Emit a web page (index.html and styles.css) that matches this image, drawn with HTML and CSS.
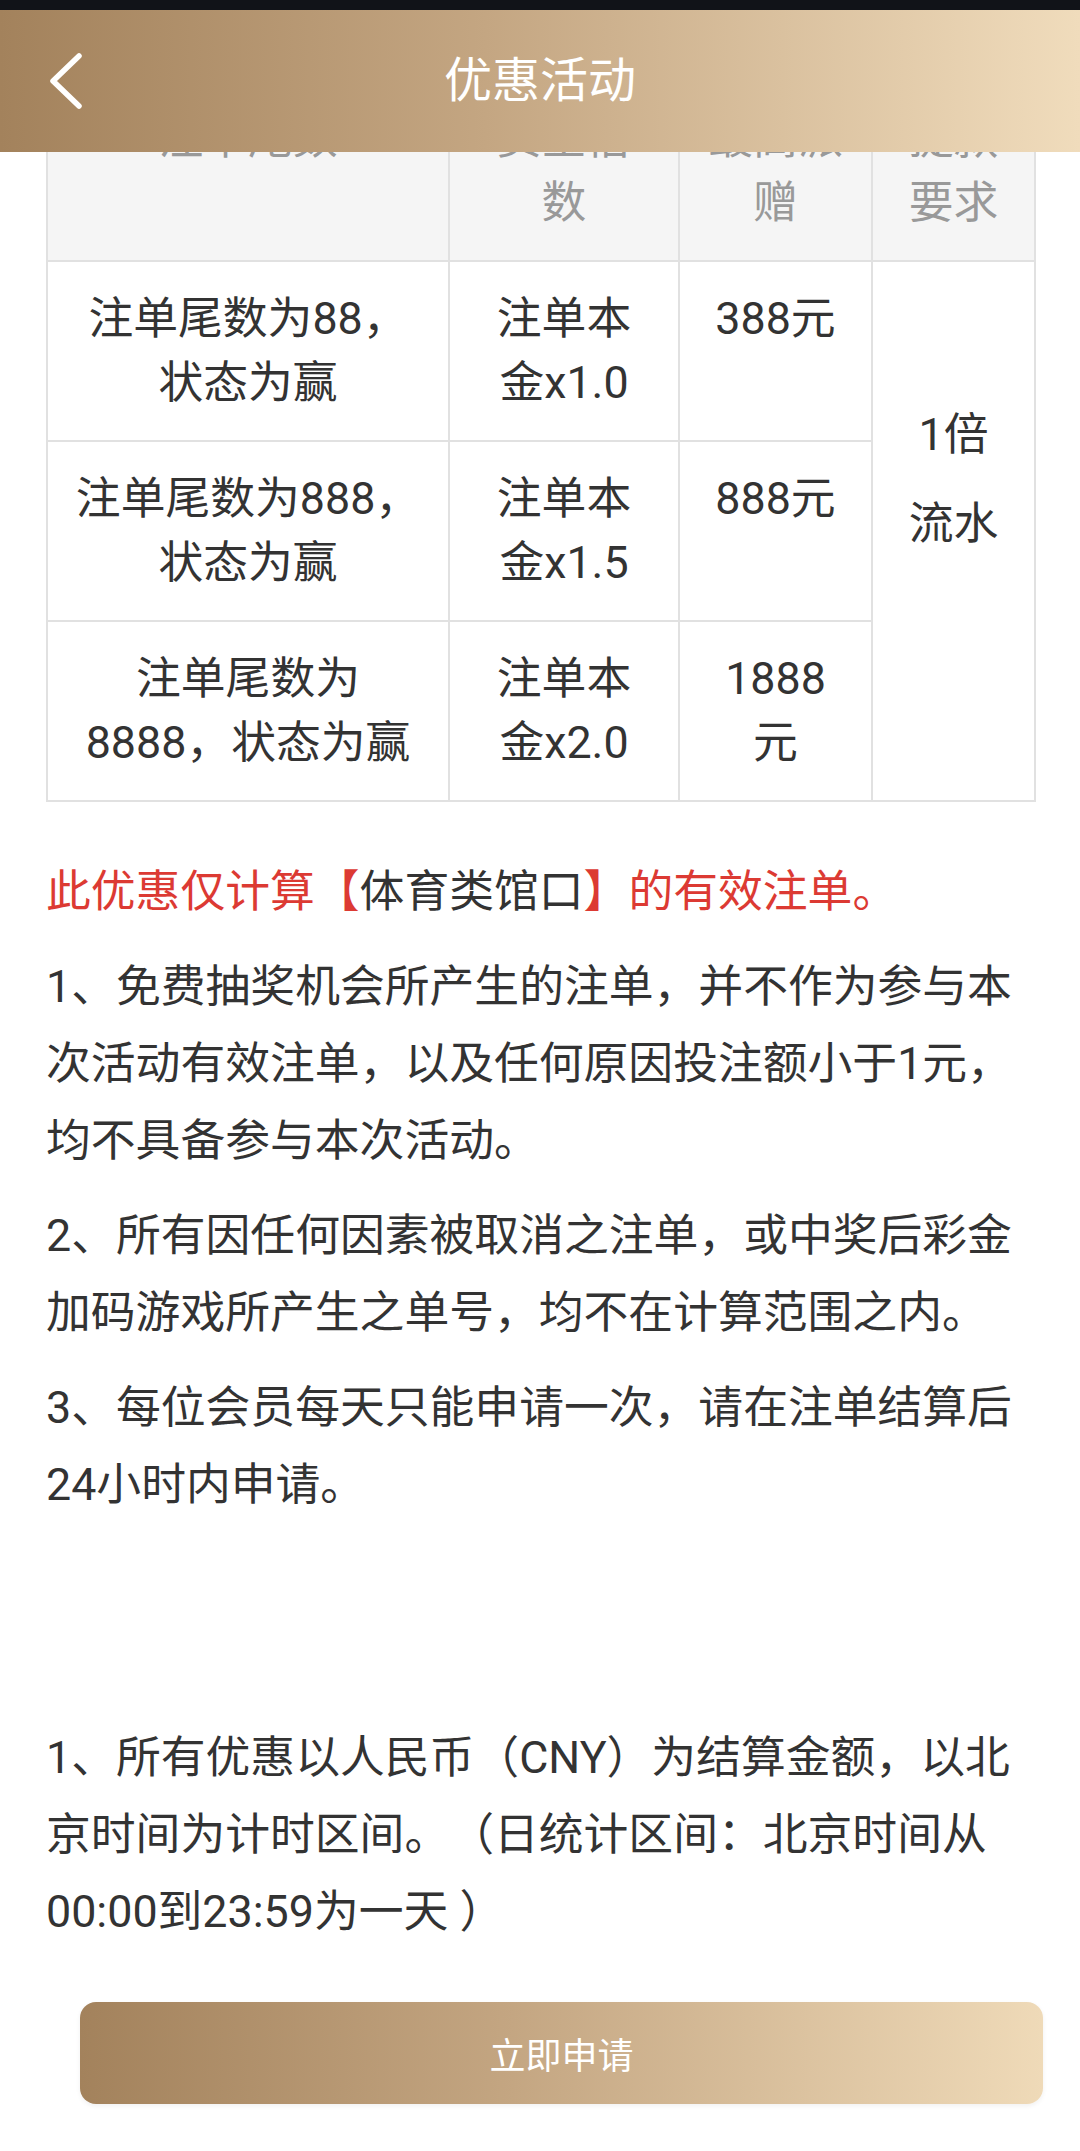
FILE: index.html
```html
<!DOCTYPE html>
<html lang="zh-CN">
<head>
  <meta charset="UTF-8">
  <meta name="viewport" content="width=device-width, initial-scale=1.0">
  <title>优惠活动</title>
  <link rel="stylesheet" href="styles.css">
</head>
<body>
  <div class="top-fixed">
    <div class="status-bar"></div>
    <div class="header">
      <button class="back-btn" aria-label="返回">
        <svg width="40" height="60" viewBox="0 0 40 60">
          <path d="M32 5 L6 30 L32 55" fill="none" stroke="#fff" stroke-width="5.5" stroke-linecap="round" stroke-linejoin="round"/>
        </svg>
      </button>
      <h1 class="title">优惠活动</h1>
      <div></div>
    </div>
  </div>

  <div class="content">
    <table class="promo-table">
      <colgroup>
        <col class="col-a">
        <col class="col-b">
        <col class="col-c">
        <col class="col-d">
      </colgroup>
      <tr>
        <th>注单尾数</th>
        <th>资金倍数</th>
        <th>最高派赠</th>
        <th>提款要求</th>
      </tr>
      <tr>
        <td>注单尾数为88，状态为赢</td>
        <td>注单本金x1.0</td>
        <td>388元</td>
        <td rowspan="3" class="flow-cell">1倍流水</td>
      </tr>
      <tr>
        <td>注单尾数为888，状态为赢</td>
        <td>注单本金x1.5</td>
        <td>888元</td>
      </tr>
      <tr>
        <td>注单尾数为8888，状态为赢</td>
        <td>注单本金x2.0</td>
        <td>1888元</td>
      </tr>
    </table>

    <div class="notes">
      <p class="red">此优惠仅计算【<span class="plain">体育类馆口</span>】的有效注单。</p>
      <p>1、免费抽奖机会所产生的注单，并不作为参与本次活动有效注单，以及任何原因投注额小于1元，均不具备参与本次活动。</p>
      <p>2、所有因任何因素被取消之注单，或中奖后彩金加码游戏所产生之单号，均不在计算范围之内。</p>
      <p>3、每位会员每天只能申请一次，请在注单结算后24小时内申请。</p>
      <p class="rules">1、所有优惠以人民币（CNY）为结算金额，以北京时间为计时区间。（日统计区间：北京时间从00:00到23:59为一天 ）</p>
    </div>
  </div>

  <div class="apply-bar">
    <button class="apply-btn">立即申请</button>
  </div>
</body>
</html>
```

FILE: styles.css
```css
body {
  margin: 0;
  background: #fff;
  color: #333;
  font-family: Roboto, "Noto Sans CJK SC", sans-serif;
  text-spacing-trim: space-all;
}
.top-fixed {
  position: fixed;
  top: 0;
  left: 0;
  right: 0;
  z-index: 10;
}
.status-bar {
  height: 10px;
  background: #111318;
}
.header {
  height: 142px;
  display: grid;
  grid-template-columns: 1fr auto 1fr;
  align-items: center;
  background: linear-gradient(90deg, #a3825c 0%, #c4a682 45%, #f0dcbc 100%);
}
.back-btn {
  justify-self: start;
  background: none;
  border: none;
  padding: 0 0 0 47px;
  display: flex;
  cursor: pointer;
}
.title {
  margin: 0 0 10px;
  font-size: 48px;
  font-weight: normal;
  color: #fff;
}
.content {
  padding: 80px 46px 0;
}
.promo-table {
  width: 988px;
  border-collapse: collapse;
  table-layout: fixed;
  font-size: 44.8px;
  line-height: 64px;
}
.col-a { width: 402px; }
.col-b { width: 230px; }
.col-c { width: 193px; }
.col-d { width: 163px; }
.promo-table th,
.promo-table td {
  border: 2px solid #e1e1e1;
  padding: 25px;
  text-align: center;
  vertical-align: top;
}
.promo-table th {
  background: #f5f5f5;
  color: #999;
  font-weight: normal;
}
.promo-table .flow-cell {
  padding-top: 128px;
  line-height: 89px;
}
.notes {
  margin-top: 51px;
  font-size: 44.8px;
  line-height: 77px;
}
.notes p {
  margin: 0 0 18px;
}
.notes .red {
  color: #dc3a33;
}
.notes .plain {
  color: #333;
}
.notes .rules {
  margin-top: 196px;
}
.apply-bar {
  padding: 34px 37px 46px 80px;
}
.apply-btn {
  width: 100%;
  height: 102px;
  border: none;
  border-radius: 16px;
  background: linear-gradient(90deg, #a3825c 0%, #c4a682 45%, #efdab8 100%);
  box-shadow: 0 2px 5px rgba(0, 0, 0, 0.06);
  color: #fff;
  font-family: inherit;
  font-size: 36px;
  cursor: pointer;
}
```
